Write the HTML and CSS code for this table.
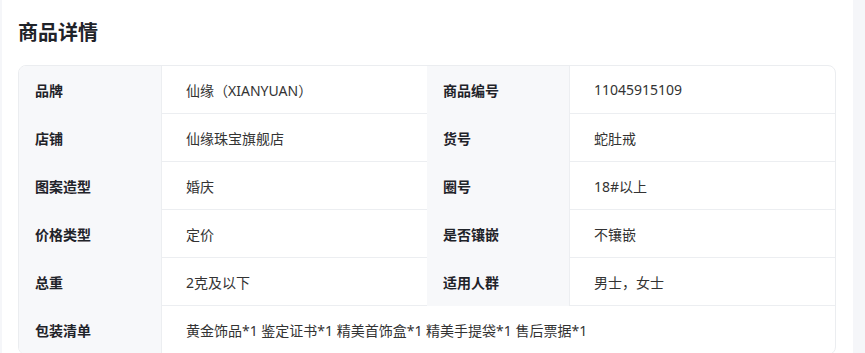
FILE: index.html
```html
<!DOCTYPE html>
<html lang="zh-CN">
<head>
<meta charset="utf-8">
<title>商品详情</title>
<link rel="stylesheet" href="styles.css">
</head>
<body>
<div class="page">
  <div class="strip-left"></div>
  <main class="main">
    <h2 class="title">商品详情</h2>
    <div class="card">
      <div class="label">品牌</div><div class="value">仙缘（XIANYUAN）</div>
      <div class="label">商品编号</div><div class="value">11045915109</div>
      <div class="label">店铺</div><div class="value">仙缘珠宝旗舰店</div>
      <div class="label">货号</div><div class="value">蛇肚戒</div>
      <div class="label">图案造型</div><div class="value">婚庆</div>
      <div class="label">圈号</div><div class="value">18#以上</div>
      <div class="label">价格类型</div><div class="value">定价</div>
      <div class="label">是否镶嵌</div><div class="value">不镶嵌</div>
      <div class="label">总重</div><div class="value">2克及以下</div>
      <div class="label">适用人群</div><div class="value">男士，女士</div>
      <div class="label">包装清单</div><div class="value wide last">黄金饰品*1 鉴定证书*1 精美首饰盒*1 精美手提袋*1 售后票据*1</div>
    </div>
  </main>
  <div class="strip-right"></div>
</div>
</body>
</html>
```
FILE: styles.css
```css
* { box-sizing: border-box; }
html, body { margin: 0; padding: 0; background: #fff; }
body {
  font-family: "Noto Sans", "Noto Sans CJK SC", sans-serif;
  color: #1f2329;
}
.page {
  display: flex;
  width: 865px;
  height: 353px;
  overflow: hidden;
}
.strip-left { width: 2px; background: #f5f6f9; flex: none; }
.strip-right { width: 13px; background: #f5f6f9; flex: none; }
.main {
  flex: 1;
  padding: 19px 17px 0 16px;
}
.title {
  margin: 0 0 18px 0;
  font-size: 20px;
  line-height: 28px;
  font-weight: 700;
  color: #1f2329;
}
.card {
  display: grid;
  grid-template-columns: 142px 266px 142px 266px;
  grid-auto-rows: 48px;
  border: 1px solid #ebedf0;
  border-radius: 8px;
  overflow: hidden;
}
.label {
  background: #f7f8fa;
  padding-left: 16px;
  display: flex;
  align-items: center;
  font-size: 14px;
  font-weight: 700;
  color: #1f2329;
}
.value {
  border-left: 1px solid #eceef1;
  border-bottom: 1px solid #eceef1;
  padding-left: 24px;
  display: flex;
  align-items: center;
  font-size: 14px;
  color: #333;
}
.value.wide { grid-column: span 3; }
.value.last { border-bottom: none; }
```
